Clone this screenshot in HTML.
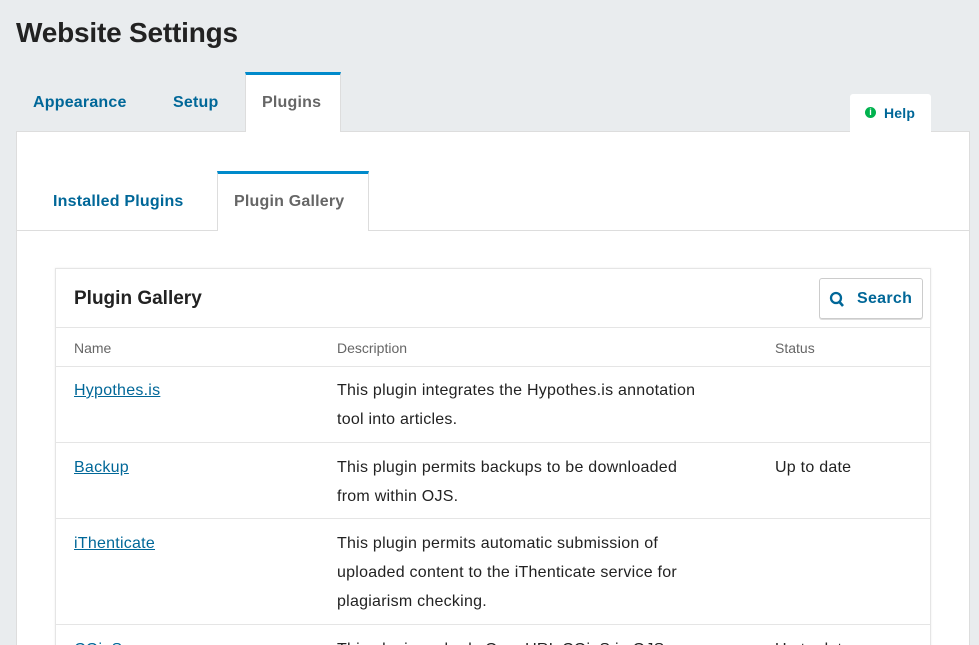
<!DOCTYPE html>
<html style="height:645px;overflow:hidden"><head><style>
*{box-sizing:border-box;margin:0;padding:0}
body{width:979px;height:645px;overflow:hidden;background:#e9ecee;font-family:"Liberation Sans",sans-serif;color:#222;position:relative}
.abs{position:absolute}
h1{position:absolute;left:16px;top:17px;font-size:28px;font-weight:bold;color:#222;letter-spacing:-0.2px}
.tab{position:absolute;font-size:16px;font-weight:bold;color:#006798;letter-spacing:0.2px}
.panel{position:absolute;left:16px;top:131px;width:954px;height:600px;background:#fff;border:1px solid #ddd}
.card{position:absolute;left:55px;top:268px;width:876px;height:400px;background:#fff;border:1px solid #e5e5e5;box-shadow:0 0 2px rgba(0,0,0,.08)}
.row{position:absolute;left:0;width:874px;border-top:1px solid #e5e5e5}
.cell{position:absolute;font-size:16px;line-height:29px;color:#222;letter-spacing:0.25px}
a{color:#006798;text-decoration:underline}
.hd{position:absolute;font-size:14px;color:#666}
</style></head><body>
<h1>Website Settings</h1>
<div class="panel"></div>
<div class="abs" style="left:245px;top:72px;width:96px;height:60px;background:#fff;border-top:3px solid #008acb;border-left:1px solid #ddd;border-right:1px solid #ddd"></div>
<div class="tab" style="left:33px;top:94px">Appearance</div>
<div class="tab" style="left:173px;top:94px">Setup</div>
<div class="tab" style="left:262px;top:94px;color:#666">Plugins</div>
<div class="abs" style="left:850px;top:94px;width:81px;height:38px;background:#fff;border-radius:3px 3px 0 0"></div>
<div class="abs" style="left:865px;top:107px;width:11px;height:11px;border-radius:50%;background:#00b24e;color:#fff;font-size:9px;font-weight:bold;text-align:center;line-height:11px">i</div>
<div class="tab" style="left:884px;top:105px;font-size:14px">Help</div>
<div class="abs" style="left:16px;top:230px;width:954px;height:1px;background:#ddd"></div>
<div class="abs" style="left:217px;top:171px;width:152px;height:60px;background:#fff;border-top:3px solid #008acb;border-left:1px solid #ddd;border-right:1px solid #ddd"></div>
<div class="tab" style="left:53px;top:193px">Installed Plugins</div>
<div class="tab" style="left:234px;top:193px;color:#666">Plugin Gallery</div>
<div class="card">
<div class="abs" style="left:18px;top:19px;font-size:19px;font-weight:bold;color:#222">Plugin Gallery</div>
<div class="abs" style="left:763px;top:9px;width:104px;height:41px;border:1px solid #ccc;border-radius:3px;box-shadow:0 1px 0 #ddd">
<svg class="abs" style="left:9px;top:12px" width="16" height="17" viewBox="0 0 16 17"><circle cx="7" cy="7" r="5" fill="none" stroke="#006798" stroke-width="2.3"/><line x1="10.5" y1="11" x2="14" y2="15" stroke="#006798" stroke-width="2.6"/></svg>
<div class="abs" style="left:37px;top:11px;font-size:16px;font-weight:bold;color:#006798;letter-spacing:0.3px">Search</div></div>
<div class="row" style="top:58px;height:39px">
<div class="hd" style="left:18px;top:12px">Name</div><div class="hd" style="left:281px;top:12px">Description</div><div class="hd" style="left:719px;top:12px">Status</div></div>
<div class="row" style="top:97px;height:76px">
<div class="cell" style="left:18px;top:9px"><a>Hypothes.is</a></div>
<div class="cell" style="left:281px;top:9px">This plugin integrates the Hypothes.is annotation<br>tool into articles.</div></div>
<div class="row" style="top:173px;height:76px">
<div class="cell" style="left:18px;top:10px"><a>Backup</a></div>
<div class="cell" style="left:281px;top:10px">This plugin permits backups to be downloaded<br>from within OJS.</div>
<div class="cell" style="left:719px;top:10px">Up to date</div></div>
<div class="row" style="top:249px;height:106px">
<div class="cell" style="left:18px;top:10px"><a>iThenticate</a></div>
<div class="cell" style="left:281px;top:10px">This plugin permits automatic submission of<br>uploaded content to the iThenticate service for<br>plagiarism checking.</div></div>
<div class="row" style="top:355px;height:76px">
<div class="cell" style="left:18px;top:10px"><a>COinS</a></div>
<div class="cell" style="left:281px;top:10px">This plugin embeds OpenURL COinS in OJS</div>
<div class="cell" style="left:719px;top:10px">Up to date</div></div>
</div>
</body></html>
